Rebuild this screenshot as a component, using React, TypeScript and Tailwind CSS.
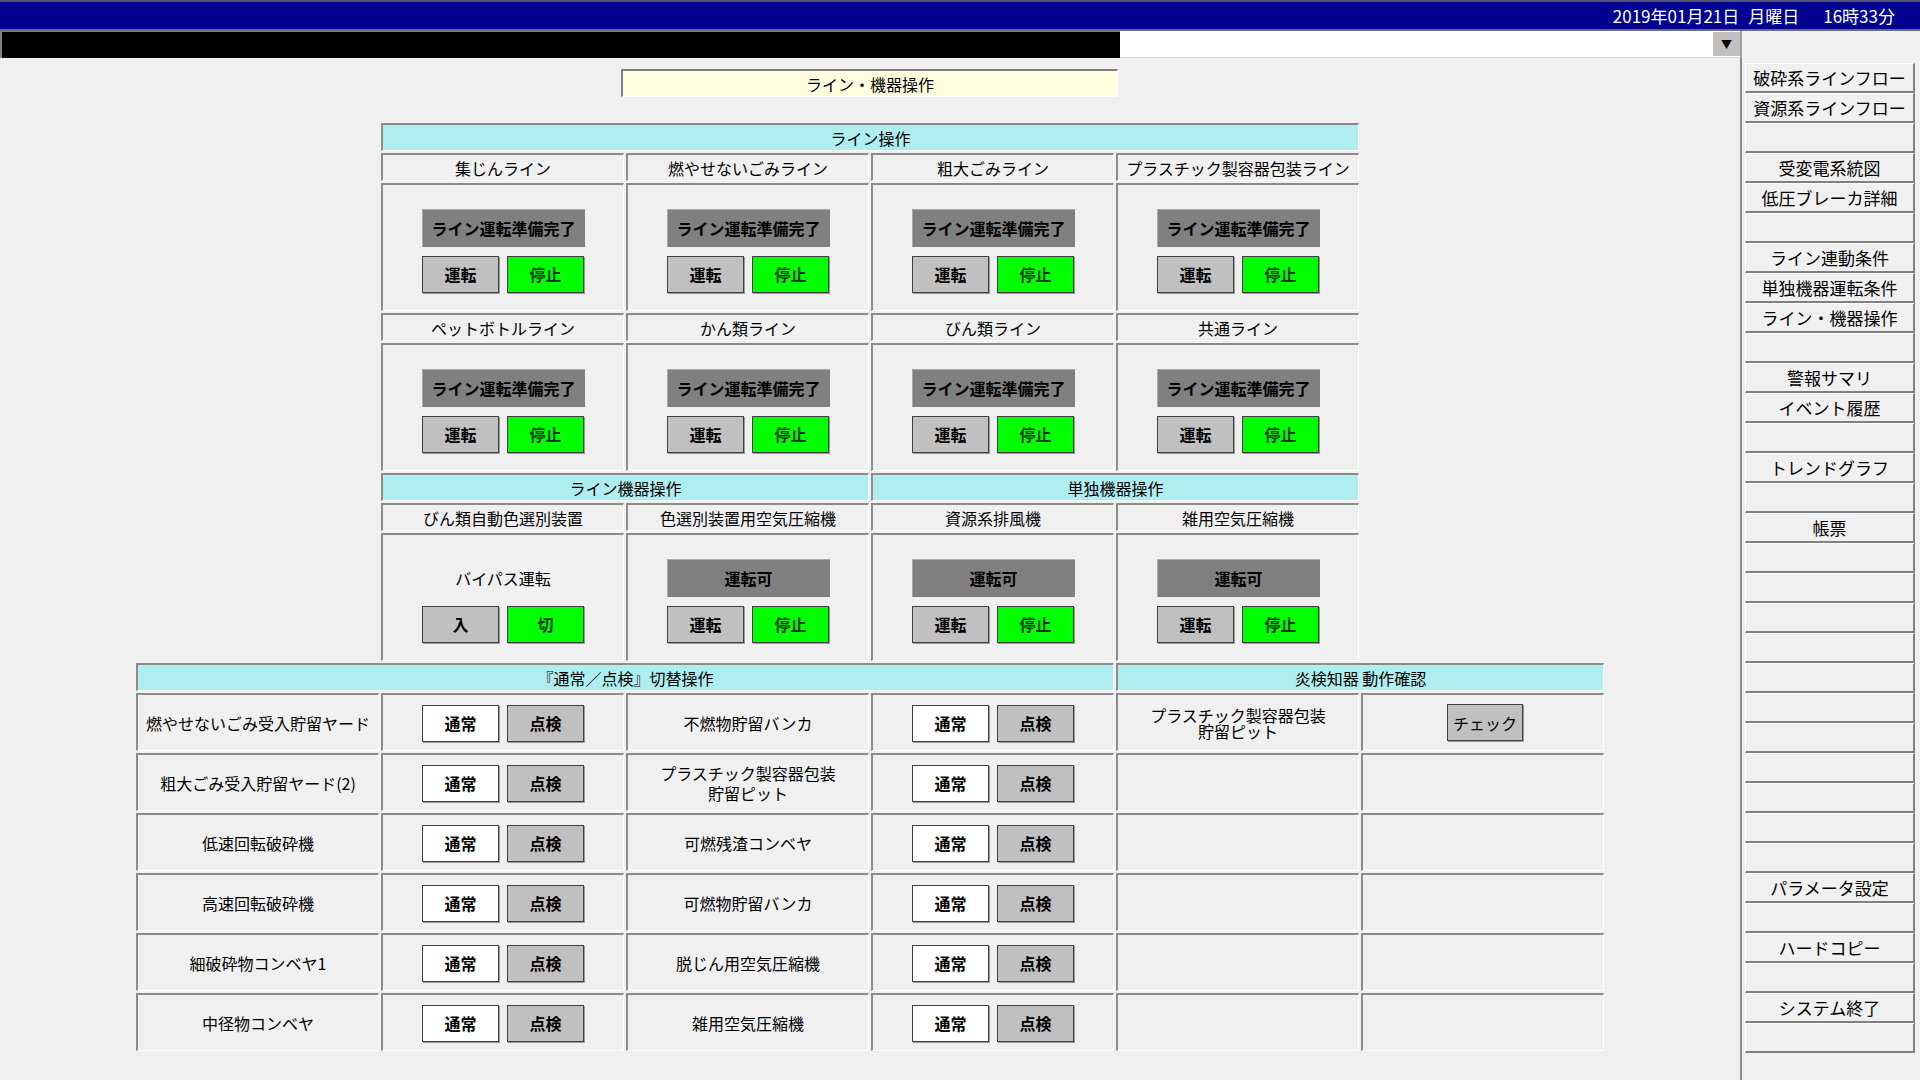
import React from "react";

const cellBorder =
  "border-t-2 border-l-2 border-r border-b border-t-[#8c8c8c] border-l-[#8c8c8c] border-r-white border-b-white";

type BtnKind = "gray" | "green" | "white";

function Btn({ label, kind }: { label: string; kind: BtnKind }) {
  const bg =
    kind === "green"
      ? "bg-[#00ff00] text-[#0a3a0a]"
      : kind === "white"
      ? "bg-white text-black"
      : "bg-[#c0c0c0] text-black";
  return (
    <div
      className={`w-[77px] h-[37px] flex items-center justify-center text-[16px] font-bold border border-[#404040] shadow-[1px_1px_0_#9a9a9a] ${bg}`}
    >
      {label}
    </div>
  );
}

function Band({ label, span }: { label: string; span: string }) {
  return (
    <div
      className={`${span} h-[28px] bg-[#afeeee] ${cellBorder} flex items-center justify-center text-[16px] leading-none`}
    >
      {label}
    </div>
  );
}

function ColHead({ label, start }: { label: string; start?: boolean }) {
  return (
    <div
      className={`${start ? "col-start-2" : ""} h-[28px] bg-[#f0f0f0] ${cellBorder} flex items-center justify-center text-[16px] leading-none`}
    >
      {label}
    </div>
  );
}

function OpBody({
  status,
  plain,
  left = "運転",
  right = "停止",
  start,
}: {
  status: string;
  plain?: boolean;
  left?: string;
  right?: string;
  start?: boolean;
}) {
  return (
    <div
      className={`${start ? "col-start-2" : ""} h-[128px] bg-[#f0f0f0] ${cellBorder} flex flex-col items-center justify-center gap-[9px] pt-[6px]`}
    >
      {plain ? (
        <div className="w-[163px] h-[38px] flex items-center justify-center text-[16px]">
          {status}
        </div>
      ) : (
        <div className="w-[163px] h-[38px] bg-[#808080] border-t border-l border-[#a8a8a8] flex items-center justify-center text-[16px] font-bold">
          {status}
        </div>
      )}
      <div className="flex gap-[8px]">
        <Btn label={left} kind="gray" />
        <Btn label={right} kind="green" />
      </div>
    </div>
  );
}

function RowCell({ children }: { children?: React.ReactNode }) {
  return (
    <div
      className={`h-[58px] bg-[#f0f0f0] ${cellBorder} flex items-center justify-center text-center text-[16px]`}
    >
      {children}
    </div>
  );
}

function SwitchPair() {
  return (
    <div className="flex gap-[8px] pt-[1px]">
      <Btn label="通常" kind="white" />
      <Btn label="点検" kind="gray" />
    </div>
  );
}

const leftRows = [
  "燃やせないごみ受入貯留ヤード",
  "粗大ごみ受入貯留ヤード(2)",
  "低速回転破砕機",
  "高速回転破砕機",
  "細破砕物コンベヤ1",
  "中径物コンベヤ",
];

const midRows = [
  "不燃物貯留バンカ",
  "プラスチック製容器包装\n貯留ピット",
  "可燃残渣コンベヤ",
  "可燃物貯留バンカ",
  "脱じん用空気圧縮機",
  "雑用空気圧縮機",
];

const sideItems = [
  "破砕系ラインフロー",
  "資源系ラインフロー",
  "",
  "受変電系統図",
  "低圧ブレーカ詳細",
  "",
  "ライン連動条件",
  "単独機器運転条件",
  "ライン・機器操作",
  "",
  "警報サマリ",
  "イベント履歴",
  "",
  "トレンドグラフ",
  "",
  "帳票",
  "",
  "",
  "",
  "",
  "",
  "",
  "",
  "",
  "",
  "",
  "",
  "パラメータ設定",
  "",
  "ハードコピー",
  "",
  "システム終了",
  "",
];

export default function App() {
  return (
    <div className="w-[1920px] h-[1080px] bg-[#f0f0f0] text-black overflow-hidden flex flex-col font-['Noto_Sans_CJK_JP','Noto_Sans',sans-serif]">
      {/* title bar */}
      <div className="h-[31px] bg-[#000090] border-t-2 border-b-2 border-t-[#505070] border-b-[#6a6a80] flex items-center justify-end pr-[25px] text-white text-[17px] leading-none">
        <span>2019年01月21日</span>
        <span className="ml-[9px]">月曜日</span>
        <span className="ml-[24px]">16時33分</span>
      </div>

      {/* message bar + combo */}
      <div className="h-[27px] flex">
        <div className="w-[1120px] bg-black border-l-2 border-t border-[#808080]" />
        <div className="w-[620px] bg-white flex justify-end border-b border-[#d8d8d8]">
          <div className="w-[27px] h-[24px] mt-[1px] bg-[#c0c0c0] flex items-center justify-center text-[11px] leading-none">
            ▼
          </div>
        </div>
        <div className="flex-1 border-l-2 border-[#a0a0a0]" />
      </div>

      <div className="flex flex-1">
        {/* main */}
        <div className="w-[1740px]">
          <div className="ml-[621px] mt-[11px] w-[497px] h-[28px] bg-[#ffffe0] border-t-2 border-l-2 border-r border-b border-t-[#808080] border-l-[#808080] border-r-white border-b-white flex items-center justify-center text-[16px] leading-none">
            ライン・機器操作
          </div>

          <div className="ml-[136px] mt-[26px] grid grid-cols-[repeat(6,243px)] gap-[2px]">
            {/* ライン操作 */}
            <Band label="ライン操作" span="col-start-2 col-span-4" />
            <ColHead label="集じんライン" start />
            <ColHead label="燃やせないごみライン" />
            <ColHead label="粗大ごみライン" />
            <ColHead label="プラスチック製容器包装ライン" />
            <OpBody status="ライン運転準備完了" start />
            <OpBody status="ライン運転準備完了" />
            <OpBody status="ライン運転準備完了" />
            <OpBody status="ライン運転準備完了" />
            <ColHead label="ペットボトルライン" start />
            <ColHead label="かん類ライン" />
            <ColHead label="びん類ライン" />
            <ColHead label="共通ライン" />
            <OpBody status="ライン運転準備完了" start />
            <OpBody status="ライン運転準備完了" />
            <OpBody status="ライン運転準備完了" />
            <OpBody status="ライン運転準備完了" />

            {/* 機器操作 */}
            <Band label="ライン機器操作" span="col-start-2 col-span-2" />
            <Band label="単独機器操作" span="col-span-2" />
            <ColHead label="びん類自動色選別装置" start />
            <ColHead label="色選別装置用空気圧縮機" />
            <ColHead label="資源系排風機" />
            <ColHead label="雑用空気圧縮機" />
            <OpBody status="バイパス運転" plain left="入" right="切" start />
            <OpBody status="運転可" />
            <OpBody status="運転可" />
            <OpBody status="運転可" />

            {/* 通常/点検 */}
            <Band label="『通常／点検』切替操作" span="col-start-1 col-span-4" />
            <Band label="炎検知器 動作確認" span="col-span-2" />
            {leftRows.map((l, i) => (
              <React.Fragment key={l}>
                <RowCell>{l}</RowCell>
                <RowCell>
                  <SwitchPair />
                </RowCell>
                <RowCell>
                  <span className="whitespace-pre-line leading-[20px]">{midRows[i]}</span>
                </RowCell>
                <RowCell>
                  <SwitchPair />
                </RowCell>
                <RowCell>
                  {i === 0 ? (
                    <span className="whitespace-pre-line leading-[16px]">
                      {"プラスチック製容器包装\n貯留ピット"}
                    </span>
                  ) : null}
                </RowCell>
                <RowCell>
                  {i === 0 ? (
                    <div className="ml-[4px] w-[76px] h-[37px] bg-[#c0c0c0] border border-[#404040] shadow-[1px_1px_0_#9a9a9a] flex items-center justify-center text-[16px]">
                      チェック
                    </div>
                  ) : null}
                </RowCell>
              </React.Fragment>
            ))}
          </div>
        </div>

        {/* side menu */}
        <div className="w-[180px] border-l-2 border-[#8c8c8c] pl-[3px] pt-[5px]">
          {sideItems.map((s, i) => (
            <div
              key={i}
              className="w-[170px] h-[30px] bg-[#f0f0f0] border-t border-l border-white border-b-2 border-r-2 border-b-[#808080] border-r-[#808080] flex items-center justify-center text-[17px] leading-none"
            >
              {s}
            </div>
          ))}
        </div>
      </div>
    </div>
  );
}
